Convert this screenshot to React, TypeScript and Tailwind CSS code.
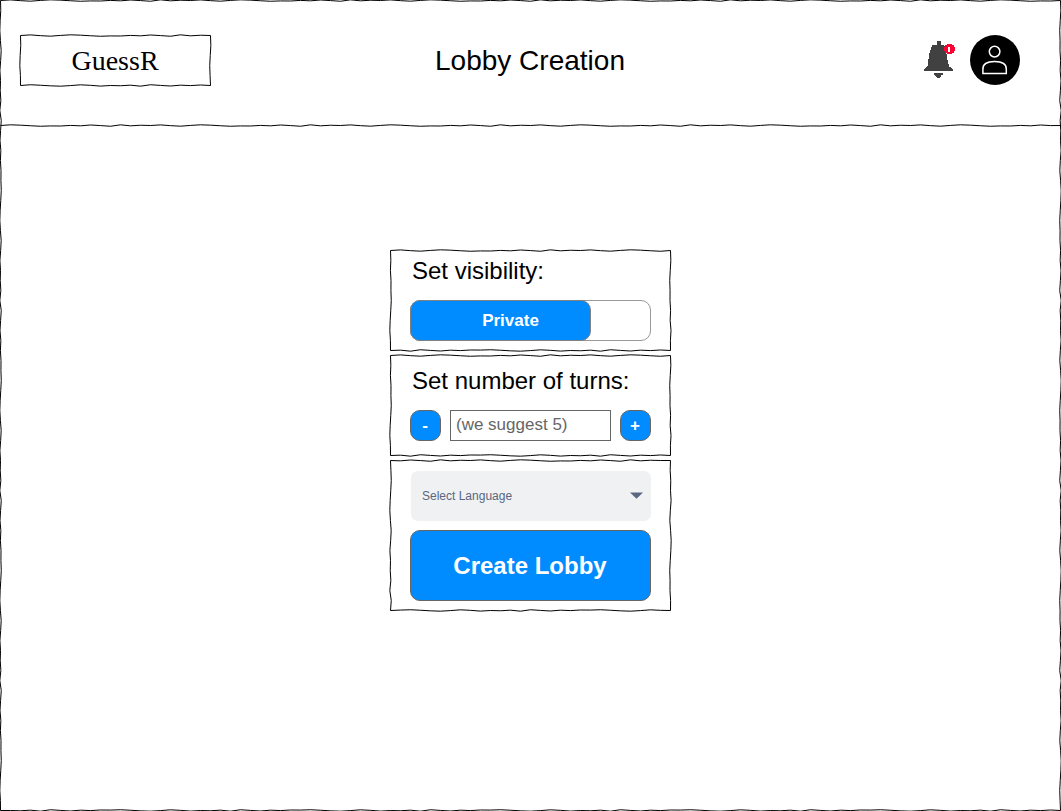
import React from "react";

const WOBBLE = [0, -0.7, 0.2, 0.8, -0.1, -0.8, -0.4, 0.3, 0.9, 0.5, 0.6, -0.1, 0.4, -0.6, 0.1, 0.9, -0.8, 0.4, -0.3];

function side(x1: number, y1: number, x2: number, y2: number, seed: number) {
  const length = Math.hypot(x2 - x1, y2 - y1);
  const steps = Math.round(length / 10);
  const dx = (x2 - x1) / length;
  const dy = (y2 - y1) / length;
  const points: string[] = [];
  for (let i = 1; i < steps; i++) {
    const offset = WOBBLE[(i + seed) % WOBBLE.length] * 0.85;
    const x = x1 + dx * i * 10 - dy * offset;
    const y = y1 + dy * i * 10 + dx * offset;
    points.push(`${x},${y}`);
  }
  points.push(`${x2},${y2}`);
  return points.join(" ");
}

function SketchFrame({ width, height, seed = 0 }: { width: number; height: number; seed?: number }) {
  const r = width + 0.5;
  const b = height + 0.5;
  const points = [
    "0.5,0.5",
    side(0.5, 0.5, r, 0.5, seed),
    side(r, 0.5, r, b, seed + 5),
    side(r, b, 0.5, b, seed + 9),
    side(0.5, b, 0.5, 0.5, seed + 3),
  ].join(" ");
  return (
    <svg className="pointer-events-none absolute left-0 top-0 overflow-visible" width={width + 1} height={height + 1} aria-hidden="true">
      <polygon points={points} fill="none" stroke="#000" strokeWidth="1" />
    </svg>
  );
}

function BellIcon() {
  return (
    <svg className="h-[50px] w-[50px]" viewBox="0 0 50 50" shapeRendering="crispEdges">
      <path
        d="M22 9H26V12.500H28L30 15L31 20L32 24L33 31L34.500 34.500L36.500 36.500L38 37.500V39H9V37.500L11 36L12.500 34L13.500 27L14.500 21L16.500 15L18 12.500H22Z"
        fill="#414141"
      />
      <path d="M19 41H28V43H26V45H25V46H22V45H21V44H20V43H19Z" fill="#414141" />
      <path d="M32 12h5v1h2v2h1v4h-1v2h-2v1h-5v-1h-2v-2h-1v-4h1v-2h2z" fill="#ff0033" />
      <path d="M33 15h2v5h-2z" fill="#fff" />
    </svg>
  );
}

function Avatar() {
  return (
    <svg className="h-[50px] w-[50px]" viewBox="0 0 50 50">
      <circle cx="25" cy="25" r="25" fill="#000" />
      <g fill="none" stroke="#fff" strokeWidth="1.5">
        <circle cx="24.6" cy="16.6" r="5.300" />
        <path d="M12.900 38.400V34c0-4.700 4.200-7.400 11.700-7.400s11.700 2.700 11.700 7.400v4.400z" />
      </g>
    </svg>
  );
}

function Panel({ height, seed, className, children }: { height: number; seed: number; className: string; children: React.ReactNode }) {
  return (
    <section className={`relative w-[281px] pl-5 pr-5 ${className}`}>
      <SketchFrame width={280} height={height} seed={seed} />
      {children}
    </section>
  );
}

export default function App() {
  return (
    <div className="relative h-[811px] w-[1061px] overflow-hidden bg-white font-['Liberation_Sans',Arial,sans-serif] text-black">
      <SketchFrame width={1060} height={810} />
      <header className="relative grid h-[125px] grid-cols-[340px_380px_1fr] items-start pt-[35px]">
        <svg className="pointer-events-none absolute left-0 top-[125px] overflow-visible" width="1061" height="1" aria-hidden="true">
          <polyline points={`0.5,0.5 ${side(0.5, 0.5, 1060.5, 0.5, 4)}`} fill="none" stroke="#000" />
        </svg>
        <div className="relative ml-5 flex h-[51px] w-[191px] items-center justify-center pr-px">
          <SketchFrame width={190} height={50} />
          <span className="font-['Liberation_Serif','Times_New_Roman',serif] text-[28px] leading-8">GuessR</span>
        </div>
        <h1 className="text-center text-[28px] leading-[51px]">Lobby Creation</h1>
        <div className="flex items-start pl-[195px]">
          <div className="-mt-[3px] h-[50px] w-[55px]">
            <BellIcon />
          </div>
          <Avatar />
        </div>
      </header>

      <main className="flex flex-col items-start gap-1 pl-[390px] pt-[125px]">
        <Panel height={100} seed={0} className="h-[101px]">
          <h2 className="h-[50px] pl-[2px] text-2xl leading-[42px]">Set visibility:</h2>
          <button className="flex h-[41px] w-[241px] rounded-[10px] border border-[#999] bg-white">
            <span className="-ml-px -mt-px flex h-[41px] w-[181px] items-center justify-center rounded-[10px] border border-[#808080] bg-[#008cff] pl-5 text-[17px] font-bold text-white">
              Private
            </span>
          </button>
        </Panel>

        <Panel height={100} seed={0} className="h-[101px]">
          <h2 className="h-[55px] whitespace-nowrap pl-[2px] text-2xl leading-[52px]">Set number of turns:</h2>
          <div className="flex w-[241px] justify-between">
            <button className="flex h-[31px] w-[31px] items-center justify-center rounded-[10px] border border-[#666] bg-[#008cff] pr-px text-[17px] font-bold text-white">
              -
            </button>
            <input
              className="h-[31px] w-[161px] border border-[#666] px-[5px] pb-px text-[17px] outline-none placeholder:text-[#666]"
              placeholder="(we suggest 5)"
            />
            <button className="flex h-[31px] w-[31px] items-center justify-center rounded-[10px] border border-[#666] bg-[#008cff] pr-px text-[17px] font-bold text-white">
              +
            </button>
          </div>
        </Panel>

        <Panel height={150} seed={11} className="h-[151px] pt-[10px]">
          <button className="mb-[9.5px] ml-[0.5px] mt-[0.5px] flex h-[50px] w-[240px] items-center justify-between rounded-[7px] bg-[#f0f1f3] pl-[11.5px] pr-[8px] text-xs text-[#596780]">
            <span>Select Language</span>
            <svg className="h-[7px] w-[13px]" viewBox="0 0 13 7">
              <path d="M0 0.500h13L6.500 6.800z" fill="#596780" />
            </svg>
          </button>
          <button className="flex h-[71px] w-[241px] items-center justify-center rounded-[10px] border border-[#666] bg-[#008cff] pr-px text-2xl font-bold text-white">
            Create Lobby
          </button>
        </Panel>
      </main>
    </div>
  );
}
